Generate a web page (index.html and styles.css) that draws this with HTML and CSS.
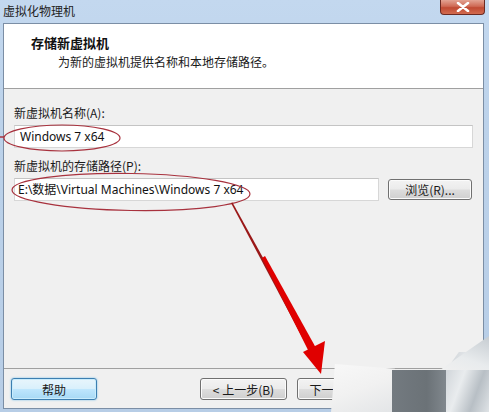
FILE: index.html
```html
<!DOCTYPE html>
<html>
<head>
<meta charset="utf-8">
<link rel="stylesheet" href="styles.css">
</head>
<body>
<div class="window">
  <div class="titlebar">
    <span class="title">虚拟化物理机</span>
    <span class="close"><svg width="14" height="10" viewBox="0 0 14 10"><path d="M2 1 L12 9 M12 1 L2 9" stroke="#fff" stroke-width="2.6" stroke-linecap="round"/></svg></span>
  </div>
  <div class="client">
    <div class="header">
      <div class="h-title">存储新虚拟机</div>
      <div class="h-sub">为新的虚拟机提供名称和本地存储路径。</div>
    </div>
    <div class="body">
      <div class="label">新虚拟机名称(A):</div>
      <div class="input wide">Windows 7 x64</div>
      <div class="label second">新虚拟机的存储路径(P):</div>
      <div class="row">
        <div class="input path">E:\数据\Virtual Machines\Windows 7 x64</div>
        <div class="btn browse">浏览(R)...</div>
      </div>
    </div>
    <div class="footer">
      <div class="btn help">帮助</div>
      <div class="btn back">&lt; 上一步(B)</div>
      <div class="btn next">下一步(N) &gt;</div>
    </div>
  </div>
  <div class="blob">
    <div class="blob-white"></div>
    <div class="blob-dark"></div>
    <div class="blob-light"></div>
    <div class="blob-top"></div>
  </div>
  <svg class="marks" width="489" height="412" viewBox="0 0 489 412">
    <ellipse cx="62" cy="138" rx="58" ry="13" fill="none" stroke="#a8323e" stroke-width="1.2"/>
    <path d="M0 137 L4 137" stroke="#a8323e" stroke-width="1.5"/>
    <ellipse cx="131" cy="192" rx="119" ry="18.5" fill="none" stroke="#a8323e" stroke-width="1.2" transform="rotate(1 131 192)"/>
    <polygon points="231,203 232.5,202.5 314,350 310,352" fill="#9a1818"/>
    <polygon points="262,258 265,256 316,348 309,352" fill="#e00000"/>
    <polygon points="303,352 325,341 321,374" fill="#e00000"/>
  </svg>
</div>
</body>
</html>
```
FILE: styles.css
```css
* { box-sizing: border-box; }
html, body { margin: 0; padding: 0; }
body {
  width: 489px;
  height: 412px;
  overflow: hidden;
  font-family: "Noto Sans CJK SC", "Noto Sans", sans-serif;
  font-size: 12px;
  color: #1a1a1a;
}
.window {
  position: relative;
  width: 489px;
  height: 412px;
  background: linear-gradient(180deg, #c3d8ef 0%, #bcd2ea 30%, #b7cde6 100%);
  display: flex;
  flex-direction: column;
}
.titlebar {
  height: 23px;
  display: flex;
  align-items: flex-start;
}
.title {
  margin: 3px 0 0 3px;
  font-size: 12px;
  line-height: 16px;
  color: #222;
}
.close {
  margin-left: auto;
  margin-right: 4px;
  width: 45px;
  height: 15px;
  border: 1px solid #6b2a22;
  border-top: none;
  border-radius: 0 0 4px 4px;
  background: linear-gradient(180deg, #e3a393 0%, #cf6a55 45%, #c04a33 55%, #d26b4f 100%);
  display: flex;
  align-items: center;
  justify-content: center;
}
.client {
  margin: 0 5px 0 3px;
  height: 386px;
  border: 1px solid #7b8ea5;
  background: #f0f0f0;
  display: flex;
  flex-direction: column;
}
.header {
  height: 65px;
  background: #fff;
  border-bottom: 1px solid #a0a0a0;
  padding: 10px 0 0 27px;
}
.h-title {
  font-weight: bold;
  font-size: 13px;
  line-height: 18px;
  color: #111;
}
.h-sub {
  margin: 1px 0 0 27px;
  line-height: 17px;
}
.body {
  padding: 16px 0 0 10px;
}
.label {
  line-height: 16px;
  height: 16px;
  margin-bottom: 4px;
}
.label.second { margin-top: 10px; }
.input {
  height: 23px;
  background: #fff;
  border: 1px solid #d7d7d7;
  border-top-color: #c4c4c4;
  font-family: "Noto Sans", "Noto Sans CJK SC", sans-serif;
  font-size: 12px;
  line-height: 21px;
  padding-left: 5px;
  color: #111;
}
.input.wide { width: 459px; }
.row {
  display: flex;
  gap: 9px;
  align-items: center;
}
.input.path {
  width: 365px;
  padding-left: 3px;
  white-space: nowrap;
}
.btn {
  height: 22px;
  border: 1px solid #707070;
  border-radius: 3px;
  background: linear-gradient(180deg, #f3f3f3 0%, #ebebeb 48%, #dddddd 52%, #cfcfcf 100%);
  display: flex;
  align-items: center;
  justify-content: center;
  font-size: 12px;
  color: #1a1a1a;
  box-shadow: inset 0 0 0 1px #fbfbfb;
}
.btn.browse { width: 84px; height: 21px; }
.footer {
  margin-top: auto;
  border-top: 1px solid #a0a0a0;
  height: 40px;
  padding: 9px 0 0 7px;
  display: flex;
  align-items: flex-start;
}
.btn.help {
  width: 86px;
  border-color: #3c7fb1;
  background: linear-gradient(180deg, #e8f5fc 0%, #d9f0fc 48%, #bee6fd 52%, #a7d9f5 100%);
  box-shadow: inset 0 0 0 1px #c9ecfc, 0 0 2px #66b8e8;
}
.btn.back { width: 87px; margin-left: 103px; }
.btn.next { width: 87px; margin-left: 10px; }
.blob {
  position: absolute;
  left: 0; top: 0;
  width: 489px; height: 412px;
  pointer-events: none;
}
.blob-white {
  position: absolute;
  left: 331px; top: 364px;
  width: 64px; height: 48px;
  background: linear-gradient(160deg, #f8f8f8 0%, #f1f1f1 50%, #e3e5e7 100%);
  clip-path: polygon(6% 0, 100% 10%, 100% 100%, 0 100%, 4% 40%);
}
.blob-dark {
  position: absolute;
  left: 392px; top: 370px;
  width: 58px; height: 42px;
  background: linear-gradient(90deg, #737a80 0%, #6b7277 60%, #858c92 100%);
}
.blob-light {
  position: absolute;
  left: 446px; top: 352px;
  width: 43px; height: 60px;
  background: linear-gradient(110deg, #c9ced3 0%, #e9ecee 40%, #b8bfc5 70%, #dfe3e6 100%);
  clip-path: polygon(30% 0, 100% 0, 100% 100%, 0 100%, 0 30%);
}
.blob-top {
  position: absolute;
  left: 440px; top: 336px;
  width: 49px; height: 34px;
  background: linear-gradient(200deg, #c6ccd1 0%, #e8ebed 60%, #f0f0f0 100%);
  clip-path: polygon(100% 0, 100% 100%, 0 100%);
}
.marks {
  position: absolute;
  left: 0; top: 0;
  pointer-events: none;
}
```
